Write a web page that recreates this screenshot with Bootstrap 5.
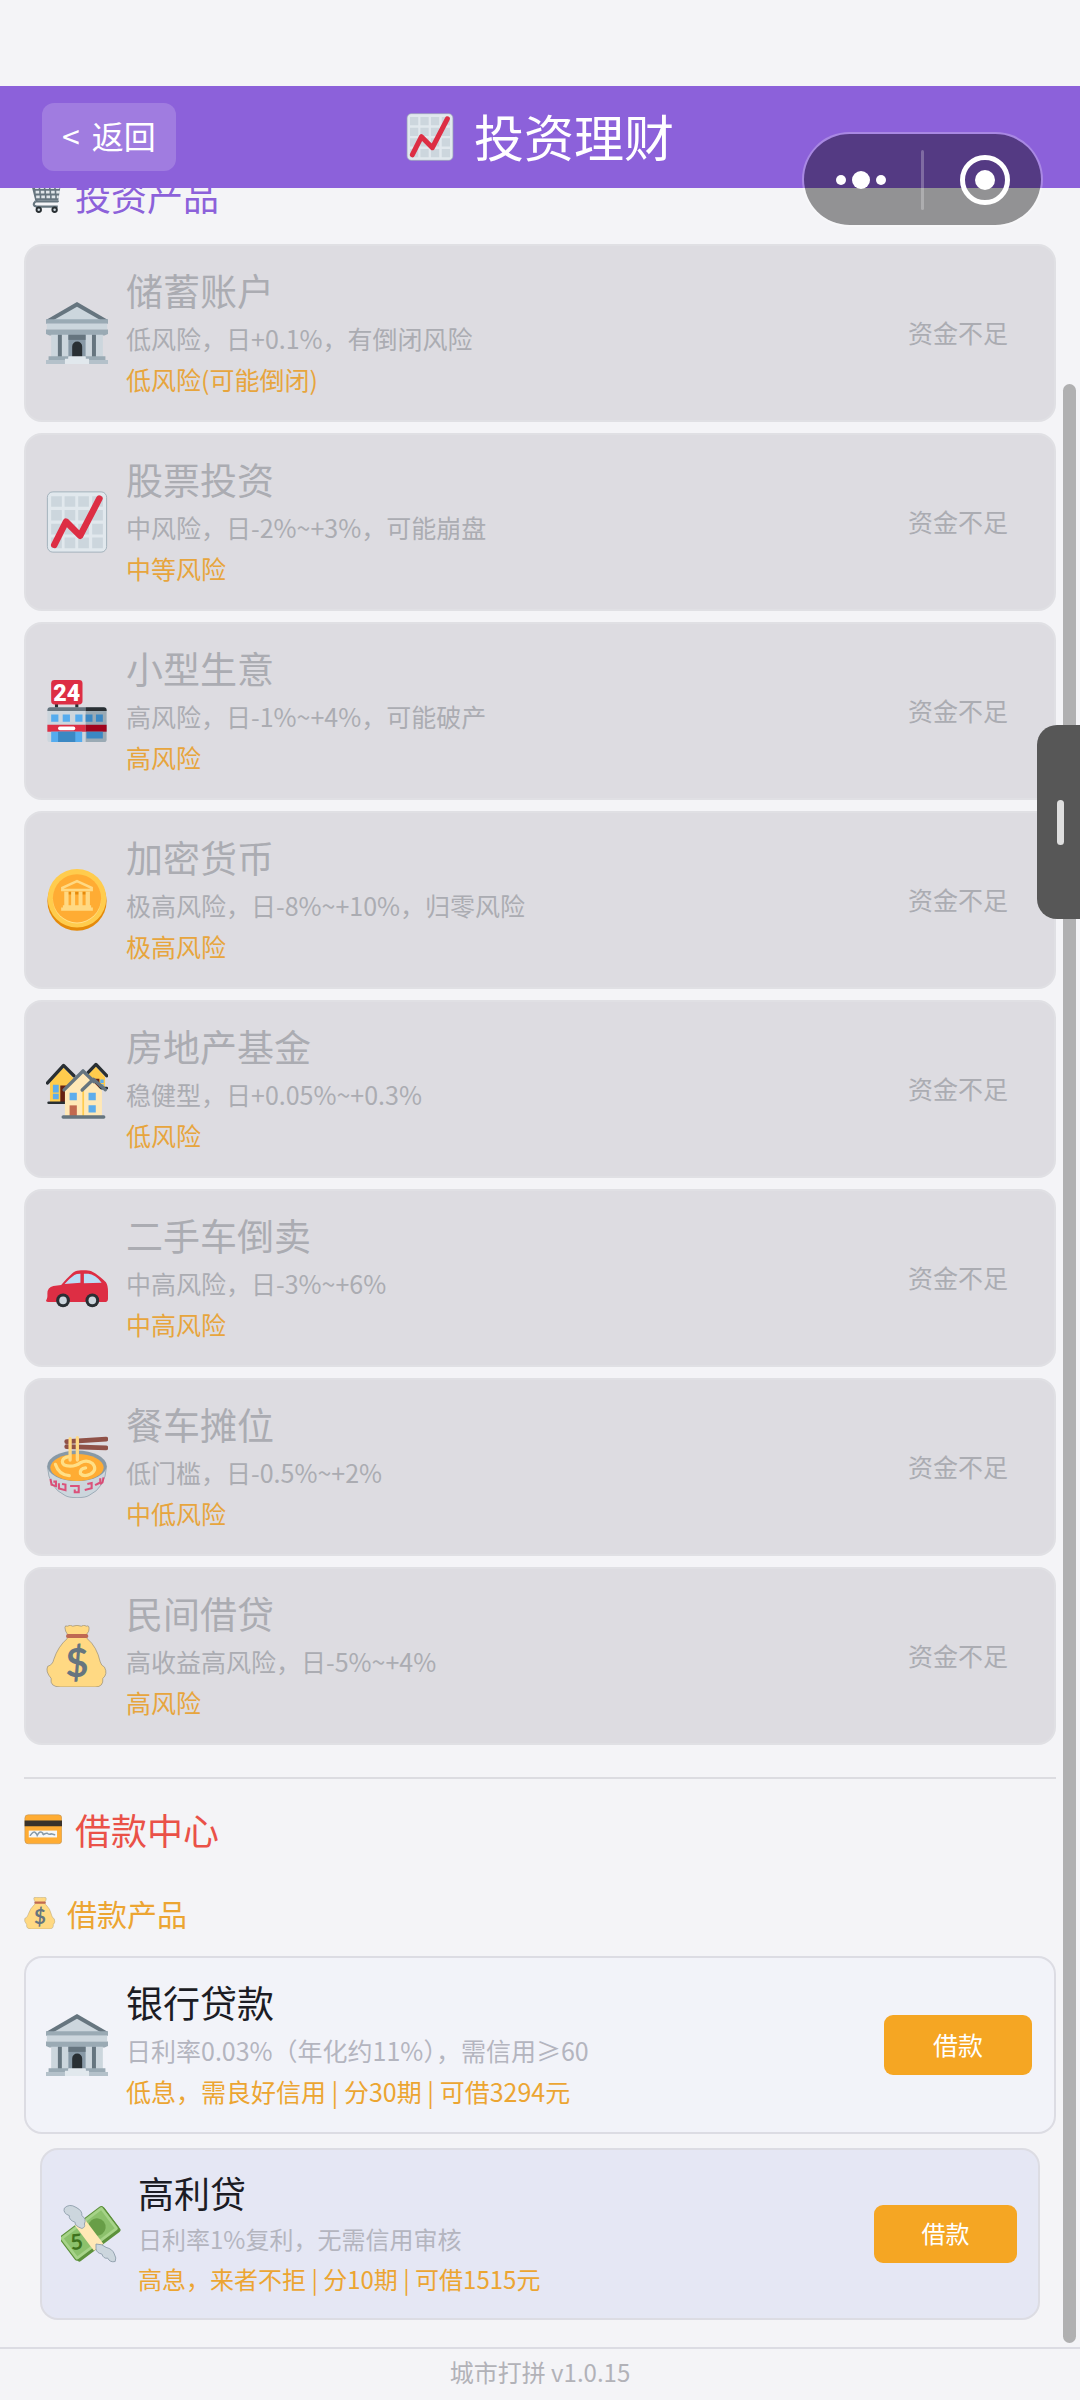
<!DOCTYPE html>
<html lang="zh-CN">
<head>
<meta charset="utf-8">
<meta name="viewport" content="width=device-width, initial-scale=1">
<title>投资理财</title>
<link href="https://cdn.jsdelivr.net/npm/bootstrap@5.3.0/dist/css/bootstrap.min.css" rel="stylesheet">
<style>
body{background:#f4f4f7;font-family:"Noto Sans CJK SC",sans-serif;color:#1c1c24;min-height:100vh}
.status-gap{height:86px}
.top-bar{background:#8c61da;height:102px;padding:0 42px;z-index:2}
.back-btn{background:#a07ce0;color:#fff;border:0;border-radius:12px;font-size:32px;line-height:40px;padding:12px 20px 16px;gap:12px}
.back-btn:hover{background:#a885e4;color:#fff}
.page-title{font-size:50px;line-height:60px;color:#fff;gap:20px}
.page-title svg{width:48px;height:50px}
.page-title span{padding-bottom:5px}
.side-space{flex:1 1 0}
.capsule{top:132px;right:37px;width:241px;height:95px;border:2px solid rgba(255,255,255,.25);border-radius:48px;background:rgba(0,0,0,.4);background-clip:padding-box;z-index:3;padding:0}
.capsule button{background:none;border:0;padding:0;flex:1 1 0;line-height:0}
.capsule i{width:3px;height:60px;background:rgba(255,255,255,.25);border-radius:2px}
.scroll-area{padding:0 24px 27px;z-index:1}
.sec-title{font-size:36px;line-height:56px;gap:13px;font-weight:400;margin:0}
.sec-title svg{width:38px;height:38px}
.sec-first{color:#8c61da;margin:-21px 0 21px}
.sec-loan{color:#ea5148}
.sub-title{font-size:30px;line-height:44px;gap:11px;color:#eca532;font-weight:400;margin:34px 0 21px}
.sub-title svg{width:32px;height:32px}
.split{border-top:2px solid #dcdce1;margin:32px 0 22px}
.items{gap:11px}
.item{border:2px solid #dcdce3;border-radius:18px;background:#f2f3f9;padding:17px 22px 17px 20px;gap:18px}
.item>svg{width:62px;height:62px;flex:none}
.item-text{padding-bottom:3px}
.item h3{font-size:37px;line-height:55px;font-weight:400;margin:0}
.item p{font-size:25px;line-height:41px;margin:0;color:#b4b5bf}
.item p.risk{color:#eca532}
.item.off{background:#dddce1;border-color:#e0e0e4}
.item.off h3,.item.off p{color:#abacb2}
.item.off p.risk{color:#e7a53d}
.act{width:148px;height:60px;border:0;border-radius:9px;font-size:25px;line-height:36px;padding:0 0 3px;flex:none}
.act-go{background:#f5a623;color:#fff}
.act-none,.act-none:disabled{background:none;color:#abacb2;opacity:1}
.item.pressed{background:#e5e7f4;margin:3px 16px 0;padding:16px 21px 16px 19px;gap:17px}
.item.pressed>svg{width:60px;height:60px}
.item.pressed h3{font-size:36px;line-height:53px}
.item.pressed p{font-size:24px;line-height:40px}
.item.pressed .act{width:143px;height:58px;font-size:24px}
.thumb{top:384px;right:4px;bottom:57px;width:13px;border-radius:7px;background:#b0b0b1;z-index:3}
.drawer-tab{top:725px;right:0;width:43px;height:194px;border:0;border-radius:20px 0 0 20px;background:#575757;z-index:4;padding:0}
.drawer-tab span{width:7px;height:45px;border-radius:4px;background:#dedede}
.app-foot{border-top:2px solid #dcdce3;font-size:24px;line-height:38px;padding:4px 0 9px;color:#b2b2b8}
</style>
<script src="https://cdn.jsdelivr.net/npm/bootstrap@5.3.0/dist/js/bootstrap.bundle.min.js"></script>
</head>
<body class="d-flex flex-column position-relative">

<svg class="d-none" xmlns="http://www.w3.org/2000/svg">
  <symbol id="bank" viewBox="0 0 36 36">
    <path fill="#66757f" d="M18 0 36 10.5H0z"/><path fill="#ccd6dd" d="M18 2.8 31.5 10.5h-27z"/>
    <path fill="#9aaab4" d="M0 10h36v2.6H0z"/><path fill="#ccd6dd" d="M.5 12.6h35V16H.5z"/><path fill="#9aaab4" d="M0 16h36v2.6l-2 .8H2l-2-.8z"/>
    <path fill="#ccd6dd" d="M3 19h30v13H3z"/><path fill="#66757f" d="M6.9 19h2.3v13H6.9zM26.7 19H29v13h-2.3z"/><path fill="#8899a6" d="M13 19h10v13H13z"/><path fill="#66757f" d="M13 19h10v3H13z"/>
    <path fill="#292f33" d="M15.2 32v-6.2a2.9 2.9 0 0 1 5.8 0V32z"/>
    <path fill="#9aaab4" d="M1.5 31.5H13v2.2H1.5zM23 31.5h11.5v2.2H23z"/><path fill="#b4c1ca" d="M0 33.7h36V36H0z"/><path fill="#e1e8ed" d="M13 31.5h10V33h2v3H11v-3h2z"/>
  </symbol>
  <symbol id="chart" viewBox="0 0 36 36">
    <rect x=".8" y=".5" width="34.4" height="35" rx="3.2" fill="#e1e8ed" stroke="#9aaab4" stroke-width=".5"/>
    <path fill="#ccd6dd" d="M3 3h6.2v6.2H3zM10.8 3H17v6.2h-6.2zM18.7 3h6.2v6.2h-6.2zM26.8 3H33v6.2h-6.2zM3 11h6.2v6.2H3zM10.8 11H17v6.2h-6.2zM18.7 11h6.2v6.2h-6.2zM26.8 11H33v6.2h-6.2zM3 19h6.2v6.2H3zM10.8 19H17v6.2h-6.2zM18.7 19h6.2v6.2h-6.2zM26.8 19H33v6.2h-6.2zM3 27h6.2v6.2H3zM10.8 27H17v6.2h-6.2zM18.7 27h6.2v6.2h-6.2zM26.8 27H33v6.2h-6.2z"/>
    <path d="M4.8 31.3 11.6 17.8 19.8 26 31 4.4" fill="none" stroke="#dd2e44" stroke-width="3.8" stroke-linecap="round" stroke-linejoin="round"/>
  </symbol>
  <symbol id="store" viewBox="0 0 36 36">
    <path fill="#292f33" d="M5.2 13H7v4H5.2zM17 13h1.8v4H17z"/><rect x="3" y="0" width="18.2" height="14.2" rx="2" fill="#dd2e44"/>
    <text x="12.1" y="12" text-anchor="middle" font-family="Roboto,sans-serif" font-weight="900" font-size="13.5" fill="#fff">24</text>
    <path fill="#ccd6dd" d="M.8 17.5Q.8 16 2.3 16H23v20H2.3Q.8 36 .8 34.5z"/><path fill="#9aaab4" d="M23 16h10.700q1.500 0 1.500 1.500v17q0 1.500-1.500 1.500H23z"/>
    <path fill="#66757f" d="M.8 17.600Q.8 15.800 2.500 15.800H23v2.200H.8z"/><path fill="#292f33" d="M23 15.800h10.500q1.700 0 1.700 1.800v.4H23z"/>
    <path fill="#55acee" d="M3 20h4.200v4.200H3zM9.700 20h4.200v4.200H9.700zM17 20h4.200v4.200H17z"/><path fill="#3b88c3" d="M23 20h4v4.200h-4zM29 20h4v4.200h-4z"/>
    <path fill="#dd2e44" d="M.8 26H23v4H.8z"/><path fill="#a0041e" d="M23 26h12.200v4H23z"/><rect x="7" y="27" width="10" height="2.200" rx="1" fill="#fff"/>
    <path fill="#55acee" d="M3 30h18v6H3z"/><path fill="#3b88c3" d="M7 30h10v6H7zM23.500 30H33v4h-9.500z"/>
  </symbol>
  <symbol id="coin" viewBox="0 0 36 36">
    <circle cx="18" cy="18.600" r="17.200" fill="#e58a0a"/><circle cx="18" cy="17" r="17" fill="#ffcc4d"/><circle cx="18" cy="17.600" r="14" fill="#ffe08a"/><circle cx="18" cy="17" r="14" fill="#ffac33"/>
    <path d="M9.500 11 18 7l8.500 4v1.200h-17z" fill="#ffac33" stroke="#ffd983" stroke-width="1.500"/>
    <path fill="#e58a0a" d="M11 13.300h14v1.500H11z"/><path fill="#ffd983" d="M10.600 13h2.500v8h-2.500zM14.600 13h2.300v8h-2.300zM18.900 13h2.300v8h-2.300zM23 13h2.500v8H23zM9.800 21h16.400v1.500H9.800zM8.800 22.300h18.400v2H8.800z"/>
  </symbol>
  <symbol id="homes" viewBox="0 0 36 36">
    <path fill="#ffcc4d" d="M2.300 14 10.200 5.500 18 14v12H2.300zM23 11l6-6 5.300 6v7H23z"/><path fill="#662113" d="M8.300 16h4v9.500h-4zM27 12h4v6h-4z"/>
    <path fill="#5dadec" d="M4 15.500h3.400V20H4zM4 20.800h3.400v3.200H4zM31.500 12.500h2v2h-2zM31.500 15.200h2v2h-2z"/>
    <path d="M.9 14.500 10.200 4.300l6 6M24.500 8.300 29 3.700l6.200 6.600" fill="none" stroke="#292f33" stroke-width="1.900" stroke-linecap="round" stroke-linejoin="round"/><path stroke="#292f33" stroke-width="1.500" stroke-linecap="round" d="M1.500 26h10M31 17.500h4.300"/>
    <path fill="#ffe8b6" d="M11 18 21.500 8l6 6 5 5V34H11z"/><path stroke="#ffcc4d" stroke-width="1" d="M21.600 19v15"/>
    <path fill="#5dadec" d="M13.700 20.200h4.200v4.300h-4.200zM24.700 20.200h4.200v4.300h-4.200zM24.700 27.500h4.200v4.200h-4.200z"/><path fill="#c1694f" d="M13.700 27.500h4.200v6.500h-4.200z"/>
    <path d="M10.500 18.500 21.500 7.500l6.300 6.200M21 18.600l6.500-6.200 7 6" fill="none" stroke="#66757f" stroke-width="2" stroke-linecap="round" stroke-linejoin="round"/><path stroke="#66757f" stroke-width="2" stroke-linecap="round" d="M10 34.300h23.500"/>
  </symbol>
  <symbol id="car" viewBox="0 0 36 36">
    <path fill="#dd2e44" d="M0 31Q1 30 .8 27q0-3.500 3.500-4.300l4.500-.7q3-3.600 6.500-6.800 1.700-1.700 5-1.700h3q3 0 5.200 1.700 4.500 3.200 6.300 5.300 1.200 1.700 1.200 5.500v4q0 2-2 2H1.500Q0 32 0 31z"/>
    <path fill="#bbddf5" d="M10.800 21.500q3-3.400 5.700-5.200 1.200-.8 3.500-.8v5.300zM22 15.500h2.500q2 0 4 1.500 2.500 1.700 3.800 3.700L22 21z"/>
    <circle cx="9.900" cy="31" r="4" fill="#292f33"/><circle cx="9.900" cy="31" r="2.200" fill="#ccd6dd"/><circle cx="26.900" cy="31" r="4" fill="#292f33"/><circle cx="26.900" cy="31" r="2.200" fill="#ccd6dd"/>
  </symbol>
  <symbol id="ramen" viewBox="0 0 36 36">
    <path fill="#ccd6dd" stroke="#8899a6" stroke-width=".4" d="M.8 17.500h34.400Q34.500 30 25 34.500q-2 1.300-7 1.300t-7-1.300Q1.500 30 .8 17.500z"/>
    <ellipse cx="18" cy="17.300" rx="17.200" ry="8.900" fill="#8899a6"/><ellipse cx="18" cy="18.300" rx="15.500" ry="7.800" fill="#ffac33"/>
    <path d="M5.500 16.500q2 6 8 6.500M13.500 12q-4 .5-4 3t4.500 2.500q3.500 0 6-2 4-2 7 .5 3 3.500-1 6-4 2-6-.2-.5-3 3-3.300" fill="none" stroke="#ffdf86" stroke-width="1.900" stroke-linecap="round"/>
    <path stroke="#8f5147" stroke-width="2.700" stroke-linecap="round" d="M12 3.300 34.800 1.800M12 6.200l22.800.7"/>
    <path stroke="#ffd983" stroke-width="1.900" stroke-linecap="round" d="M14 1.500V14M18.200 1v13"/>
    <path d="M2.600 25l.6 3.300 2.600.8v-2.600H4.300M7.500 27.500v3l3.800 1v-3.300l-2-.3M14 29h5v3.700h-2.300v-1.600M22.500 31.300l4-1v-3l-2.500.6M28.500 28.500l3-1.500v-2.500M31.300 28l1.500-1 .6-3" fill="none" stroke="#dd3a68" stroke-opacity=".85" stroke-width="1.200"/>
  </symbol>
  <symbol id="bag" viewBox="0 0 36 36">
    <path fill="#ffd983" stroke="#8a826e" stroke-width=".35" d="M11 1.500q0-1.500 1.500-.8 1.500-1.200 3 0 2.500-1 5 0 1.500-1.200 3 0Q25 0 25 2q.3 1.500-1.500 3.500L24 8q5.500 4.500 7.500 13.500.5 2 2.500 3 2 4-1 6.500.5 5-4.500 5h-20Q2 36 3 31-.5 27 1 24q3-1 3.500-4Q7 12.500 12.200 8l.3-2.500Q11 3.500 11 1.500z"/>
    <rect x="11.700" y="5.200" width="12.800" height="2.300" rx="1" fill="#bf6952"/>
    <text x="18" y="30" text-anchor="middle" font-family="Lato,sans-serif" font-weight="700" font-size="23" fill="#66757f">$</text>
  </symbol>
  <symbol id="wings" viewBox="0 0 36 36">
    <g transform="rotate(-37 18 19)">
      <rect x="2.500" y="9.500" width="32" height="18" rx="1.500" fill="#5c913b"/><rect x="2" y="8.500" width="32" height="17.500" rx="1.500" fill="#a6d388" stroke="#5c913b" stroke-width=".7"/><rect x="4" y="10.500" width="28" height="13.500" fill="#77b255" fill-opacity=".55"/>
      <circle cx="24" cy="17" r="5.200" fill="#5c913b" fill-opacity=".75"/><rect x="14" y="8.300" width="7" height="19" fill="#ffe8b6"/>
      <text x="8.800" y="21.500" text-anchor="middle" transform="rotate(30 9 17)" font-family="Lato,sans-serif" font-weight="700" font-size="13" fill="#3e721d">5</text>
    </g>
    <path fill="#ccd6dd" stroke="#8899a6" stroke-width=".5" d="M2 2.500Q5-.5 9 2q4 2 3.500 5 3 2 1.500 5 .8 2-1.500 2.700Q8 13 8.500 11 4.500 9.500 5 7 1 5.500 2 2.500z"/>
    <path fill="#ccd6dd" stroke="#8899a6" stroke-width=".5" d="M21 24q4 0 6 2 4 1 5 4 1.500 2.500.5 4.500-3 .8-4.500-2-2.500.5-3.500-2.500-3-.5-3.500-3z"/>
  </symbol>
  <symbol id="credit" viewBox="0 0 36 36">
    <rect x=".8" y="4.500" width="35" height="27.500" rx="3.200" fill="#ffac33" stroke="#b9905a" stroke-width=".5"/><path fill="#39322a" d="M.6 10H36v5.400H.6z"/><path fill="#f4f7f9" d="M4.500 19.500h26.800v6.500H4.500z"/>
    <path d="M6 24q3-4 4.500-2.800T12.500 24q2-4 4-3t1.500 2.700q2-2 4-1.700 2 1.700 4 .5l3 1" fill="none" stroke="#8899a6" stroke-width="1.400" stroke-linecap="round"/>
  </symbol>
  <symbol id="cart" viewBox="0 0 36 36">
    <path d="M2 4h5l5 20h20" fill="none" stroke="#66757f" stroke-width="2.200" stroke-linecap="round"/><path fill="#66757f" d="M8 7h27l-2.500 16H11z"/>
    <path stroke="#dfe5e9" stroke-width="2.600" stroke-dasharray="3.400 1.500" d="M10.500 11h24M11 15.300h23M11.500 19.700h21.500"/><path d="M11 24q-4 4 1 5h20" fill="none" stroke="#66757f" stroke-width="2"/>
    <circle cx="14" cy="32" r="3" fill="#292f33"/><circle cx="14" cy="32" r="1.200" fill="#ccd6dd"/><circle cx="29" cy="32" r="3" fill="#292f33"/><circle cx="29" cy="32" r="1.200" fill="#ccd6dd"/>
  </symbol>
</svg>

<div class="status-gap flex-shrink-0"></div>
<header class="top-bar d-flex align-items-center flex-shrink-0 position-relative">
  <div class="side-space"><button type="button" class="btn back-btn d-flex"><span>&lt;</span><span>返回</span></button></div>
  <h1 class="page-title d-flex align-items-center fw-normal m-0"><svg aria-hidden="true"><use href="#chart"/></svg><span>投资理财</span></h1>
  <div class="side-space"></div>
</header>

<div class="capsule position-absolute d-flex align-items-center">
  <button type="button" class="pe-1" aria-label="更多"><svg width="52" height="20" viewBox="0 0 52 20" fill="#fff"><circle cx="6" cy="10" r="5"/><circle cx="26" cy="10" r="9"/><circle cx="46" cy="10" r="5"/></svg></button>
  <i></i>
  <button type="button" class="ps-1" aria-label="关闭"><svg width="50" height="50" viewBox="0 0 50 50"><circle cx="25" cy="25" r="22.500" fill="none" stroke="#fff" stroke-width="5"/><circle cx="25" cy="25" r="10" fill="#fff"/></svg></button>
</div>

<main class="scroll-area flex-grow-1 position-relative">
  <h2 class="sec-title sec-first d-flex align-items-center"><svg aria-hidden="true"><use href="#cart"/></svg>投资产品</h2>
  <section class="items d-flex flex-column">
    <article class="item off d-flex align-items-center"><svg aria-hidden="true"><use href="#bank"/></svg><div class="item-text flex-grow-1"><h3>储蓄账户</h3><p>低风险，日+0.1%，有倒闭风险</p><p class="risk">低风险(可能倒闭)</p></div><button type="button" class="btn act act-none" disabled>资金不足</button></article>
    <article class="item off d-flex align-items-center"><svg aria-hidden="true"><use href="#chart"/></svg><div class="item-text flex-grow-1"><h3>股票投资</h3><p>中风险，日-2%~+3%，可能崩盘</p><p class="risk">中等风险</p></div><button type="button" class="btn act act-none" disabled>资金不足</button></article>
    <article class="item off d-flex align-items-center"><svg aria-hidden="true"><use href="#store"/></svg><div class="item-text flex-grow-1"><h3>小型生意</h3><p>高风险，日-1%~+4%，可能破产</p><p class="risk">高风险</p></div><button type="button" class="btn act act-none" disabled>资金不足</button></article>
    <article class="item off d-flex align-items-center"><svg aria-hidden="true"><use href="#coin"/></svg><div class="item-text flex-grow-1"><h3>加密货币</h3><p>极高风险，日-8%~+10%，归零风险</p><p class="risk">极高风险</p></div><button type="button" class="btn act act-none" disabled>资金不足</button></article>
    <article class="item off d-flex align-items-center"><svg aria-hidden="true"><use href="#homes"/></svg><div class="item-text flex-grow-1"><h3>房地产基金</h3><p>稳健型，日+0.05%~+0.3%</p><p class="risk">低风险</p></div><button type="button" class="btn act act-none" disabled>资金不足</button></article>
    <article class="item off d-flex align-items-center"><svg aria-hidden="true"><use href="#car"/></svg><div class="item-text flex-grow-1"><h3>二手车倒卖</h3><p>中高风险，日-3%~+6%</p><p class="risk">中高风险</p></div><button type="button" class="btn act act-none" disabled>资金不足</button></article>
    <article class="item off d-flex align-items-center"><svg aria-hidden="true"><use href="#ramen"/></svg><div class="item-text flex-grow-1"><h3>餐车摊位</h3><p>低门槛，日-0.5%~+2%</p><p class="risk">中低风险</p></div><button type="button" class="btn act act-none" disabled>资金不足</button></article>
    <article class="item off d-flex align-items-center"><svg aria-hidden="true"><use href="#bag"/></svg><div class="item-text flex-grow-1"><h3>民间借贷</h3><p>高收益高风险，日-5%~+4%</p><p class="risk">高风险</p></div><button type="button" class="btn act act-none" disabled>资金不足</button></article>
  </section>

  <div class="split"></div>
  <h2 class="sec-title sec-loan d-flex align-items-center"><svg aria-hidden="true"><use href="#credit"/></svg>借款中心</h2>
  <h3 class="sub-title d-flex align-items-center"><svg aria-hidden="true"><use href="#bag"/></svg>借款产品</h3>
  <section class="items d-flex flex-column">
    <article class="item d-flex align-items-center"><svg aria-hidden="true"><use href="#bank"/></svg><div class="item-text flex-grow-1"><h3>银行贷款</h3><p>日利率0.03%（年化约11%），需信用≥60</p><p class="risk">低息，需良好信用 | 分30期 | 可借3294元</p></div><button type="button" class="btn act act-go">借款</button></article>
    <article class="item pressed d-flex align-items-center"><svg aria-hidden="true"><use href="#wings"/></svg><div class="item-text flex-grow-1"><h3>高利贷</h3><p>日利率1%复利，无需信用审核</p><p class="risk">高息，来者不拒 | 分10期 | 可借1515元</p></div><button type="button" class="btn act act-go">借款</button></article>
  </section>
</main>
<div class="thumb position-absolute"></div>
<button type="button" class="drawer-tab position-absolute d-flex align-items-center justify-content-center ps-1" aria-label="展开侧栏"><span></span></button>

<footer class="app-foot text-center flex-shrink-0">城市打拼 v1.0.15</footer>
</body>
</html>
